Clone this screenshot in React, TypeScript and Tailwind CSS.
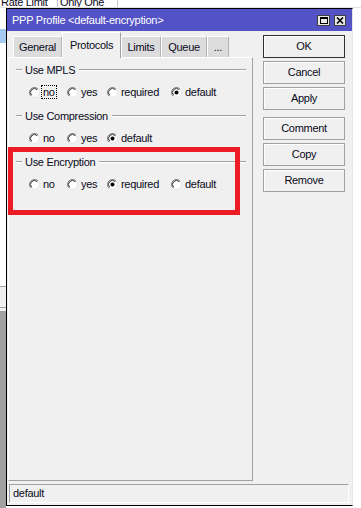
import React from "react";

type Opt = { label: string; w: string };

const rowA: Opt[] = [
  { label: "no", w: "w-[38px]" },
  { label: "yes", w: "w-[40px]" },
  { label: "required", w: "w-[64px]" },
  { label: "default", w: "w-auto" },
];

const rowB: Opt[] = [
  { label: "no", w: "w-[38px]" },
  { label: "yes", w: "w-[40px]" },
  { label: "default", w: "w-auto" },
];

const tabs = [
  { label: "General", w: "w-[49px]" },
  { label: "Protocols", w: "w-[59px]", active: true },
  { label: "Limits", w: "w-[40px]" },
  { label: "Queue", w: "w-[46px]" },
  { label: "...", w: "w-[22px]" },
];

function Radio({ checked }: { checked?: boolean }) {
  return (
    <svg width="11" height="11" viewBox="0 0 11 11" className="shrink-0">
      <circle cx="5.5" cy="5.5" r="5" fill="#fff" />
      <path d="M1.96 9.04 A5 5 0 0 1 9.04 1.96" fill="none" stroke="#808080" />
      <path d="M2.67 8.33 A4 4 0 0 1 8.33 2.67" fill="none" stroke="#2a2a2a" />
      <path d="M9.04 1.96 A5 5 0 0 1 1.96 9.04" fill="none" stroke="#e3e3e3" />
      {checked && <circle cx="5.5" cy="5.5" r="2" fill="#000" />}
    </svg>
  );
}

function Group({
  title,
  options,
  checked,
  focus,
}: {
  title: string;
  options: Opt[];
  checked: string;
  focus?: string;
}) {
  return (
    <div className="mb-[10px]">
      <div className="flex h-[14px] items-center pl-[7px] pr-[6px]">
        <div className="h-[2px] w-[6px] border-y border-t-[#a0a0a0] border-b-white" />
        <span className="ml-[3px] mr-[4px] leading-none">{title}</span>
        <div className="h-[2px] flex-1 border-y border-t-[#a0a0a0] border-b-white" />
      </div>
      <div className="mt-[8px] flex h-[14px] items-center pl-[20px]">
        {options.map((o) => (
          <div key={o.label} className={`flex items-center ${o.w}`}>
            <Radio checked={o.label === checked} />
            <span
              className={`ml-[1px] border px-[1px] leading-[12px] ${
                focus === o.label ? "border-dotted border-black" : "border-transparent"
              }`}
            >
              {o.label}
            </span>
          </div>
        ))}
      </div>
    </div>
  );
}

function Btn({ label, main, className = "" }: { label: string; main?: boolean; className?: string }) {
  return (
    <div
      className={`flex h-[23px] w-[82px] items-center justify-center border bg-[#f0f0f0] shadow-[inset_1px_1px_0_#ffffff] ${
        main ? "border-[#303030]" : "border-[#a0a0a0]"
      } ${className}`}
    >
      {label}
    </div>
  );
}

export default function App() {
  return (
    <div className="relative h-[508px] w-[361px] overflow-hidden bg-white font-['Liberation_Sans',Arial,sans-serif] text-[11px] tracking-[-0.3px] text-[#0a0a1a]">
      {/* list behind the dialog */}
      <div className="h-[8px] overflow-hidden border-b border-[#e0e0e0]">
        <div className="-mt-[3px] flex leading-[11px]">
          <div className="w-[58px] border-r border-[#c8c8c8] pl-[1px]">Rate Limit</div>
          <div className="w-[60px] border-r border-[#c8c8c8] pl-[2px]">Only One</div>
        </div>
      </div>
      <div className="flex h-[500px]">
        <div className="flex w-[6px] flex-col">
          <div className="h-[21px] bg-white" />
          <div className="h-[14px] bg-[#a4cbef]" />
          <div className="h-[243px] bg-white" />
          <div className="h-[1px] bg-[#a0a0a0]" />
          <div className="h-[20px] bg-[#f0f0f0]" />
          <div className="h-[1px] bg-[#a0a0a0]" />
          <div className="h-[3px] bg-[#f0f0f0]" />
          <div className="flex-1 bg-[#a0a0a0]" />
        </div>
      </div>

      {/* dialog window */}
      <div className="absolute left-[6px] top-[8px] flex h-[498px] w-[347px] flex-col border-y border-l border-black border-r border-r-[#e4e4e4] bg-[#f0f0f0]">
        <div className="flex h-[22px] items-center justify-between bg-[#5353c6] pl-[5px] pr-[6px] text-white">
          <span className="tracking-[-0.25px]">PPP Profile &lt;default-encryption&gt;</span>
          <div className="flex gap-[4px]">
            <div className="flex h-[11px] w-[13px] items-center justify-center border border-[#404040] bg-[#e8e8e8]">
              <div className="h-[7px] w-[8px] border border-t-2 border-black" />
            </div>
            <div className="flex h-[11px] w-[12px] items-center justify-center border border-[#404040] bg-[#e8e8e8]">
              <svg width="8" height="7" viewBox="0 0 8 7">
                <path d="M1 0.5 L7 6.5 M7 0.5 L1 6.5" stroke="#000" strokeWidth="1.6" />
              </svg>
            </div>
          </div>
        </div>

        <div className="flex flex-1">
          <div className="ml-[1px] flex w-[245px] flex-col">
            <div className="flex h-[26px] items-end pl-[5px]">
              {tabs.map((t) =>
                t.active ? (
                  <div
                    key={t.label}
                    className={`relative z-10 -mb-[1px] flex h-[26px] items-center justify-center border-x border-t border-l-white border-t-white border-r-[#a0a0a0] bg-[#f0f0f0] pb-[1px] ${t.w}`}
                  >
                    {t.label}
                  </div>
                ) : (
                  <div
                    key={t.label}
                    className={`flex h-[21px] items-center justify-center border-x border-t border-l-white border-t-white border-r-[#b4b4b4] bg-[#dcdcdc] pt-[1px] ${t.w}`}
                  >
                    {t.label}
                  </div>
                )
              )}
            </div>
            <div className="flex-1 border border-l-white border-t-white border-r-[#a0a0a0] border-b-[#a0a0a0] pt-[5px]">
              <Group title="Use MPLS" options={rowA} checked="default" focus="no" />
              <Group title="Use Compression" options={rowB} checked="default" />
              <Group title="Use Encryption" options={rowA} checked="required" />
            </div>
          </div>

          <div className="ml-[10px] flex flex-col gap-[3px] pt-[4px]">
            <Btn label="OK" main />
            <Btn label="Cancel" />
            <Btn label="Apply" />
            <Btn label="Comment" className="mt-[4px]" />
            <Btn label="Copy" />
            <Btn label="Remove" />
          </div>
        </div>

        <div className="mb-[2px] ml-[2px] mt-[3px] flex h-[19px] w-[340px] items-center border border-l-[#a0a0a0] border-t-[#a0a0a0] border-r-white border-b-white pl-[3px]">
          default
        </div>
      </div>

      {/* red highlight drawn on the screenshot */}
      <div className="absolute left-[8px] top-[147px] h-[68px] w-[232px] border-[5px] border-[#ed1c24]" />
    </div>
  );
}
